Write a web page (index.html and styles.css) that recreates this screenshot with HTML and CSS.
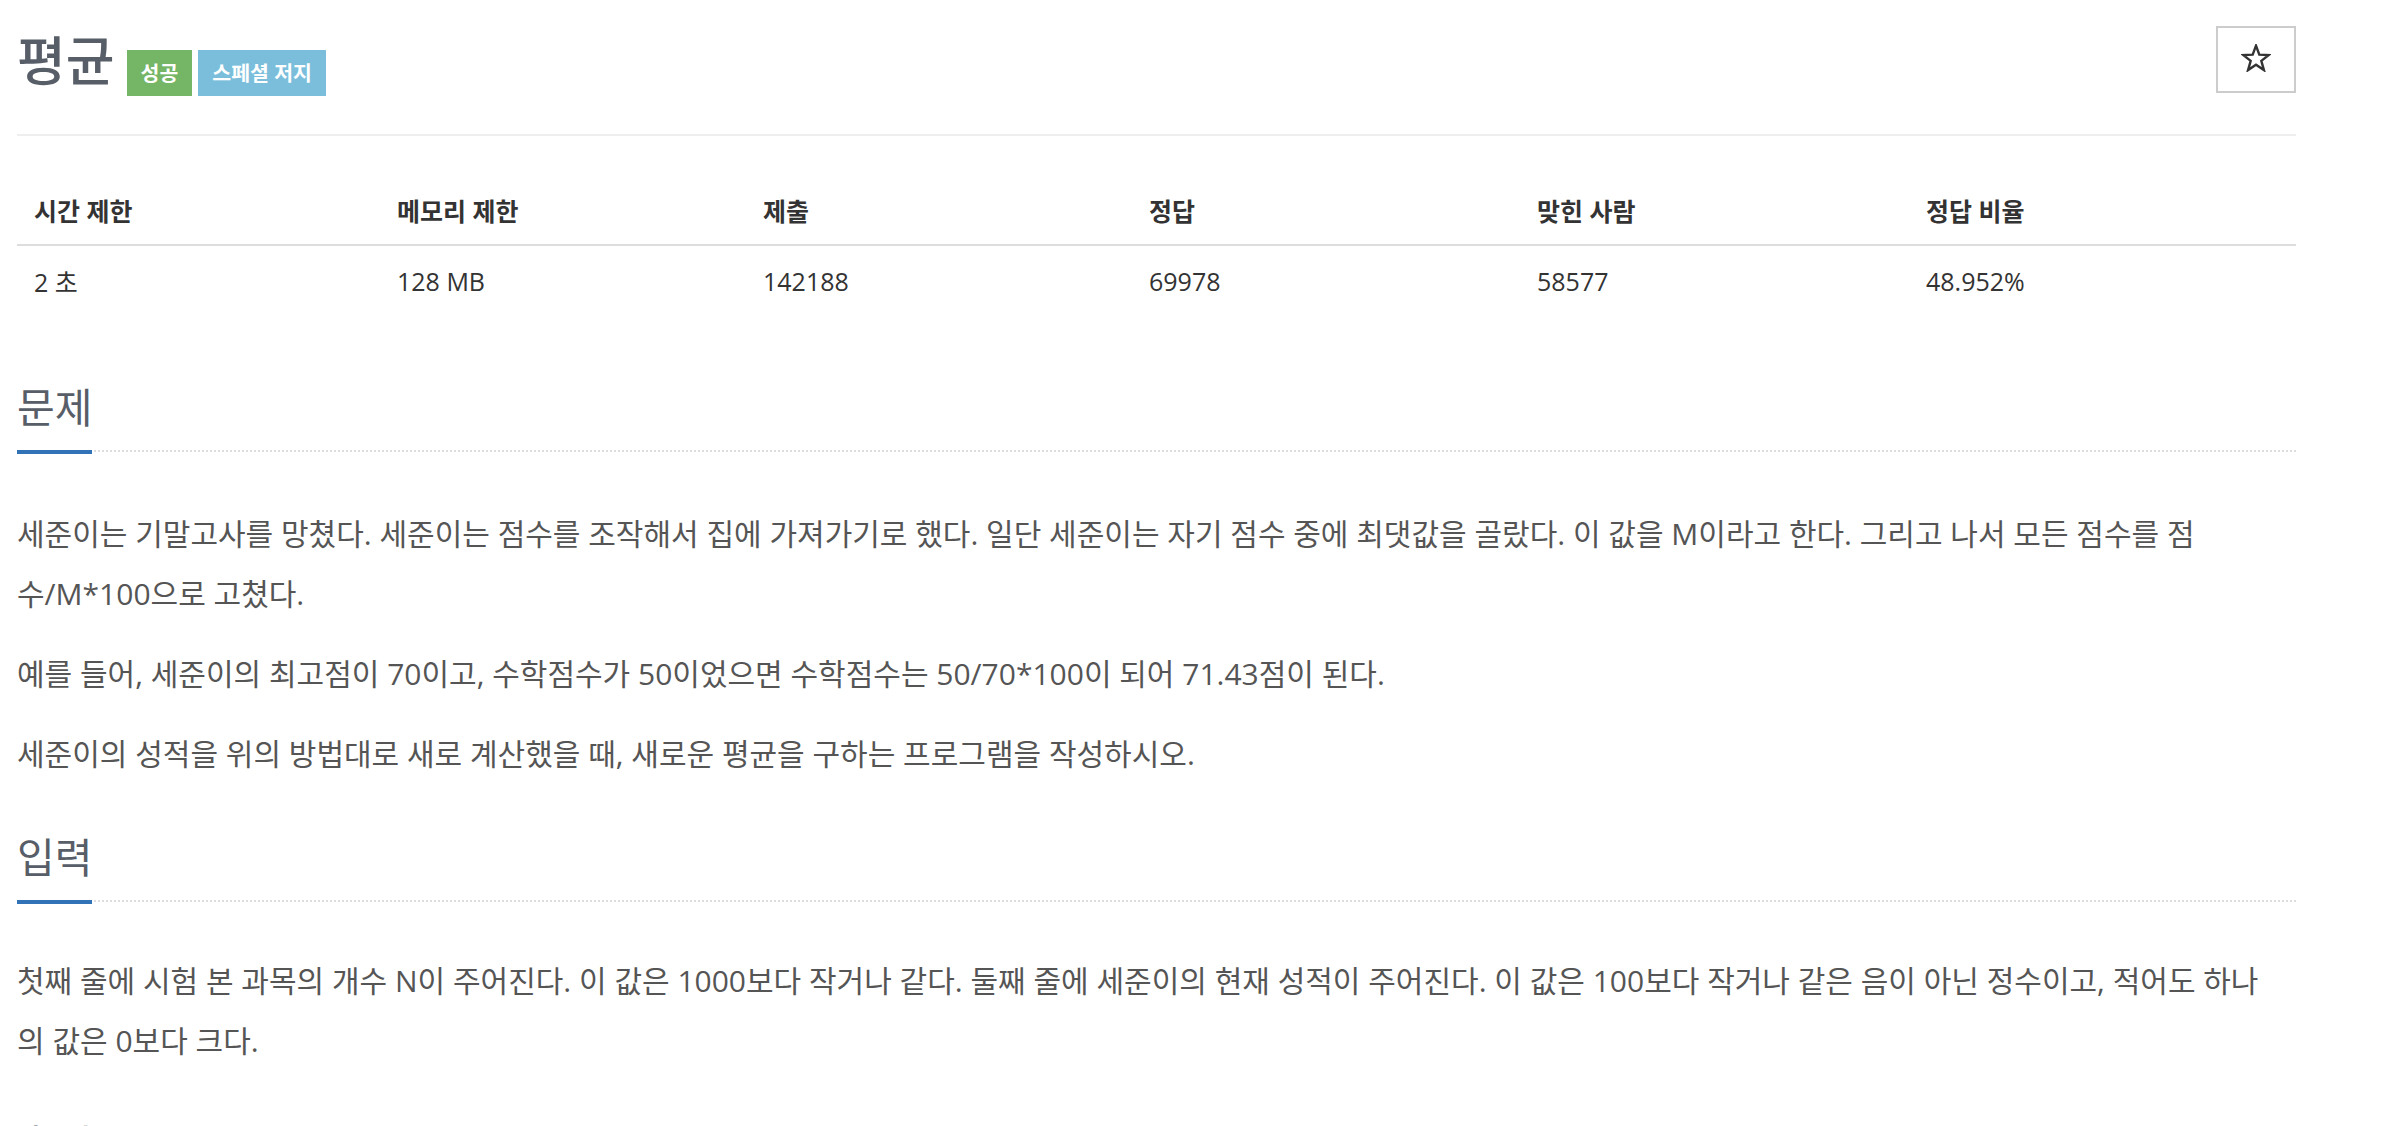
FILE: index.html
```html
<!DOCTYPE html>
<html lang="ko">
<head>
<meta charset="utf-8">
<title>평균</title>
<link rel="stylesheet" href="styles.css">
</head>
<body>
<div class="page">
  <div class="title-row">
    <h1 class="title">평균</h1>
    <div class="badges">
      <span class="badge badge-success">성공</span>
      <span class="badge badge-info">스페셜 저지</span>
    </div>
    <button class="star-btn" type="button" aria-label="즐겨찾기">
      <svg class="star-icon" width="30" height="28" viewBox="-1 -1 30 28">
        <polygon points="14,0.7 17.29,9.67 26.84,10.03 19.33,15.93 21.94,25.12 14,19.8 6.06,25.12 8.67,15.93 1.16,10.03 10.71,9.67"/>
      </svg>
    </button>
  </div>
  <hr class="divider">
  <table class="stats">
    <colgroup>
      <col class="col-1"><col class="col-2"><col class="col-3"><col class="col-4"><col class="col-5"><col class="col-6">
    </colgroup>
    <thead>
      <tr><th>시간 제한</th><th>메모리 제한</th><th>제출</th><th>정답</th><th>맞힌 사람</th><th>정답 비율</th></tr>
    </thead>
    <tbody>
      <tr><td>2 초</td><td>128 MB</td><td>142188</td><td>69978</td><td>58577</td><td>48.952%</td></tr>
    </tbody>
  </table>

  <section class="section">
    <div class="section-head"><h2>문제</h2></div>
    <div class="section-body">
      <p>세준이는 기말고사를 망쳤다. 세준이는 점수를 조작해서 집에 가져가기로 했다. 일단 세준이는 자기 점수 중에 최댓값을 골랐다. 이 값을 M이라고 한다. 그리고 나서 모든 점수를 점<span class="expr">수/M*100으로</span> 고쳤다.</p>
      <p>예를 들어, 세준이의 최고점이 70이고, 수학점수가 50이었으면 수학점수는 50/70*100이 되어 71.43점이 된다.</p>
      <p>세준이의 성적을 위의 방법대로 새로 계산했을 때, 새로운 평균을 구하는 프로그램을 작성하시오.</p>
    </div>
  </section>

  <section class="section">
    <div class="section-head"><h2>입력</h2></div>
    <div class="section-body">
      <p>첫째 줄에 시험 본 과목의 개수 N이 주어진다. 이 값은 1000보다 작거나 같다. 둘째 줄에 세준이의 현재 성적이 주어진다. 이 값은 100보다 작거나 같은 음이 아닌 정수이고, 적어도 하나의 값은 0보다 크다.</p>
    </div>
  </section>

  <section class="section">
    <div class="section-head"><h2>출력</h2></div>
    <div class="section-body">
      <p>첫째 줄에 새로운 평균을 출력한다. 실제 정답과 출력값의 절대오차 또는 상대오차가 10<sup>-2</sup> 이하이면 정답이다.</p>
    </div>
  </section>
</div>
</body>
</html>
```

FILE: styles.css
```css
html {
  overflow: hidden;
}

body {
  margin: 0;
  background: #fff;
  color: #555;
  font-family: "Open Sans", "Noto Sans CJK KR", sans-serif;
}

.page {
  display: flex;
  flex-direction: column;
  width: 2279px;
  margin-left: 17px;
}

/* ---------- title row ---------- */
.title-row {
  display: flex;
  align-items: flex-start;
  padding-top: 26px;
}

.title {
  margin: 8px 0 0;
  font-size: 53px;
  line-height: 53px;
  font-weight: 500;
  color: #585e68;
}

.badges {
  display: flex;
  gap: 6px;
  margin: 24px 0 0 12px;
}

.badge {
  display: block;
  height: 46px;
  line-height: 46px;
  padding: 0 14px;
  font-size: 20.5px;
  font-weight: 700;
  color: #fff;
}

.badge-success {
  background: #74b566;
}

.badge-info {
  background: #7abedc;
}

.star-btn {
  margin-left: auto;
  width: 80px;
  height: 67px;
  padding: 0 0 4px;
  border: 2px solid #ccc;
  background: #fff;
  display: flex;
  align-items: center;
  justify-content: center;
  box-sizing: border-box;
}

.star-icon polygon {
  fill: none;
  stroke: #333;
  stroke-width: 2.4;
  stroke-linejoin: miter;
}

.divider {
  margin: 38px 0 0;
  height: 0;
  border: 0;
  border-top: 2px solid #eee;
}

/* ---------- stats table ---------- */
.stats {
  width: 100%;
  margin: 40px 0 38px;
  border-collapse: separate;
  border-spacing: 0;
  table-layout: fixed;
}

.col-1 { width: 363px; }
.col-2 { width: 366px; }
.col-3 { width: 386px; }
.col-4 { width: 388px; }
.col-5 { width: 389px; }
.col-6 { width: 387px; }

.stats th {
  box-sizing: border-box;
  height: 70px;
  padding: 0 0 0 17px;
  text-align: left;
  vertical-align: middle;
  font-size: 25px;
  font-weight: 700;
  color: #333;
  border-bottom: 2px solid #ddd;
}

.stats td {
  box-sizing: border-box;
  height: 70px;
  padding: 0 0 0 17px;
  vertical-align: middle;
  font-size: 25px;
  color: #333;
}

/* ---------- problem sections ---------- */
.section {
  margin-top: 33px;
}

.section-head {
  display: flex;
  border-bottom: 2px dotted #ddd;
}

.section-head h2 {
  margin: 0 0 -4px;
  padding-bottom: 22px;
  font-size: 41px;
  line-height: 41px;
  font-weight: 400;
  color: #585e68;
  border-bottom: 4px solid #3273b7;
}

.section-body {
  padding: 52px 12px 0 0;
}

.section + .section .section-body {
  padding-top: 49px;
}

.section-body p {
  margin: 0 0 20px;
  font-size: 30px;
  line-height: 60px;
  color: #555;
}

.expr {
  white-space: nowrap;
}

.section-body sup {
  font-size: 19px;
  line-height: 0;
}
```
